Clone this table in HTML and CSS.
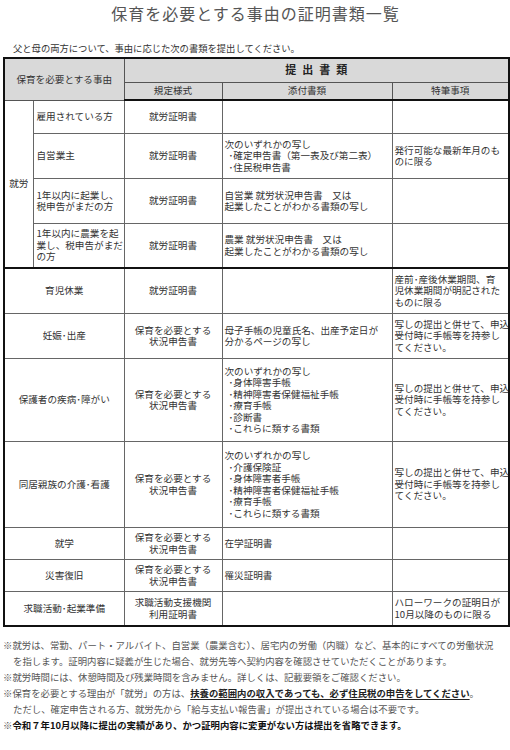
FILE: index.html
```html
<!DOCTYPE html>
<html lang="ja">
<head>
<meta charset="utf-8">
<title>保育を必要とする事由の証明書類一覧</title>
<link rel="stylesheet" href="styles.css">
</head>
<body>
<div class="page">
  <h1 class="title">保育を必要とする事由の証明書類一覧</h1>
  <p class="lead">父と母の両方について、事由に応じた次の書類を提出してください。</p>

  <table class="docs">
    <colgroup>
      <col class="c-cat"><col class="c-sub"><col class="c-form"><col class="c-att"><col class="c-note">
    </colgroup>
    <thead>
      <tr class="h-top">
        <th colspan="2" rowspan="2" class="th-reason">保育を必要とする事由</th>
        <th colspan="3" class="th-main"><span>提出書類</span></th>
      </tr>
      <tr class="h-sub">
        <th>規定様式</th>
        <th>添付書類</th>
        <th>特筆事項</th>
      </tr>
    </thead>
    <tbody>
      <tr class="r-33">
        <td rowspan="4" class="cat">就労</td>
        <td class="sub">雇用されている方</td>
        <td class="form">就労証明書</td>
        <td class="att"></td>
        <td class="note"></td>
      </tr>
      <tr class="r-45">
        <td class="sub">自営業主</td>
        <td class="form">就労証明書</td>
        <td class="att">次のいずれかの写し<br><span class="item">･確定申告書（第一表及び第二表）</span><br><span class="item">･住民税申告書</span></td>
        <td class="note">発行可能な最新年月のも<br>のに限る</td>
      </tr>
      <tr class="r-45">
        <td class="sub">1年以内に起業し、<br>税申告がまだの方</td>
        <td class="form">就労証明書</td>
        <td class="att">自営業 就労状況申告書　又は<br>起業したことがわかる書類の写し</td>
        <td class="note"></td>
      </tr>
      <tr class="r-44">
        <td class="sub">1年以内に農業を起<br>業し、税申告がまだ<br>の方</td>
        <td class="form">就労証明書</td>
        <td class="att">農業 就労状況申告書　又は<br>起業したことがわかる書類の写し</td>
        <td class="note"></td>
      </tr>
      <tr class="r-45 group">
        <td colspan="2" class="reason">育児休業</td>
        <td class="form">就労証明書</td>
        <td class="att"></td>
        <td class="note">産前･産後休業期間、育<br>児休業期間が明記された<br>ものに限る</td>
      </tr>
      <tr class="r-45">
        <td colspan="2" class="reason">妊娠･出産</td>
        <td class="form">保育を必要とする<br>状況申告書</td>
        <td class="att">母子手帳の児童氏名、出産予定日が<br>分かるページの写し</td>
        <td class="note">写しの提出と併せて、申込<br>受付時に手帳等を持参し<br>てください。</td>
      </tr>
      <tr class="r-83">
        <td colspan="2" class="reason">保護者の疾病･障がい</td>
        <td class="form">保育を必要とする<br>状況申告書</td>
        <td class="att">次のいずれかの写し<br><span class="item">･身体障害手帳</span><br><span class="item">･精神障害者保健福祉手帳</span><br><span class="item">･療育手帳</span><br><span class="item">･診断書</span><br><span class="item">･これらに類する書類</span></td>
        <td class="note">写しの提出と併せて、申込<br>受付時に手帳等を持参し<br>てください。</td>
      </tr>
      <tr class="r-86">
        <td colspan="2" class="reason">同居親族の介護･看護</td>
        <td class="form">保育を必要とする<br>状況申告書</td>
        <td class="att">次のいずれかの写し<br><span class="item">･介護保険証</span><br><span class="item">･身体障害者手帳</span><br><span class="item">･精神障害者保健福祉手帳</span><br><span class="item">･療育手帳</span><br><span class="item">･これらに類する書類</span></td>
        <td class="note">写しの提出と併せて、申込<br>受付時に手帳等を持参し<br>てください。</td>
      </tr>
      <tr class="r-32">
        <td colspan="2" class="reason">就学</td>
        <td class="form">保育を必要とする<br>状況申告書</td>
        <td class="att">在学証明書</td>
        <td class="note"></td>
      </tr>
      <tr class="r-32">
        <td colspan="2" class="reason">災害復旧</td>
        <td class="form">保育を必要とする<br>状況申告書</td>
        <td class="att">罹災証明書</td>
        <td class="note"></td>
      </tr>
      <tr class="r-34">
        <td colspan="2" class="reason">求職活動･起業準備</td>
        <td class="form">求職活動支援機関<br>利用証明書</td>
        <td class="att"></td>
        <td class="note">ハローワークの証明日が<br>10月以降のものに限る</td>
      </tr>
    </tbody>
  </table>

  <div class="notes">
    <p class="n">※就労は、常勤、パート・アルバイト、自営業（農業含む）、居宅内の労働（内職）など、基本的にすべての労働状況<br>を指します。証明内容に疑義が生じた場合、就労先等へ契約内容を確認させていただくことがあります。</p>
    <p class="n">※就労時間には、休憩時間及び残業時間を含みません。詳しくは、記載要領をご確認ください。</p>
    <p class="n">※保育を必要とする理由が「就労」の方は、<strong class="em">扶養の範囲内の収入であっても、必ず住民税の申告をしてください</strong>。<br>ただし、確定申告される方、就労先から「給与支払い報告書」が提出されている場合は不要です。</p>
    <p class="n">※<strong class="strong">令和７年10月以降に提出の実績があり、かつ証明内容に変更がない方は提出を省略できます。</strong></p>
  </div>
</div>
</body>
</html>
```

FILE: styles.css
```css
html, body {
  margin: 0;
  padding: 0;
  background: #fff;
}

body {
  font-family: "Noto Sans CJK JP", "Noto Sans", sans-serif;
  color: #333;
}

.page {
  width: 505px;
  padding: 1px 2px 0 3px;
}

.title {
  margin: 0;
  font-size: 16px;
  font-weight: 400;
  line-height: 24px;
  letter-spacing: 1px;
  text-align: center;
  color: #555;
}

.lead {
  margin: 16px 0 0 10px;
  font-size: 9.3px;
  line-height: 14px;
  color: #333;
}

.docs {
  margin-top: 2px;
  width: 505px;
  table-layout: fixed;
  border-collapse: collapse;
  border: 2px solid #111;
  font-size: 9.6px;
  line-height: 11.5px;
}

.c-cat { width: 29px; }
.c-sub { width: 91px; }
.c-form { width: 98px; }
.c-att { width: 170px; }
.c-note { width: 117px; }

.docs th {
  background: #d9d9d9;
  font-weight: 400;
  color: #333;
  border: 1px solid #555;
  padding: 0;
  text-align: center;
  vertical-align: middle;
}

.h-top th { height: 23px; }
.h-sub th { height: 16px; border-bottom: 2px solid #111; }
.th-reason { border-bottom: 2px solid #111; }

.th-main span {
  font-size: 11px;
  font-weight: 700;
  letter-spacing: 6px;
  padding-left: 6px;
  color: #222;
}

.docs td {
  border: 1px solid #666;
  border-top: 1px solid #222;
  padding: 0;
  vertical-align: middle;
  white-space: nowrap;
  overflow: hidden;
}

.docs tr.group td { border-top: 2px solid #111; }

.r-32 td { height: 31px; }
.r-33 td { height: 32px; }
.r-34 td { height: 33px; }
.r-44 td { height: 43px; }
.r-45 td { height: 44px; }
.r-83 td { height: 82px; }
.r-86 td { height: 85px; }

.cat { text-align: center; }
.sub { text-align: left; padding-left: 3px !important; }
.reason { text-align: center; }
.form { text-align: center; }
.att { text-align: left; padding-left: 2px !important; }
.note { text-align: left; padding-left: 2px !important; }

.item { padding-left: 4px; }

.notes {
  margin-top: 10px;
}

.n {
  margin: 0;
  font-size: 9.4px;
  line-height: 16px;
  color: #555;
  padding-left: 10px;
  text-indent: -10px;
  white-space: nowrap;
}

.em {
  font-weight: 700;
  color: #222;
  text-decoration: underline;
  text-underline-offset: 2px;
}

.strong {
  font-weight: 700;
  color: #111;
}
```
